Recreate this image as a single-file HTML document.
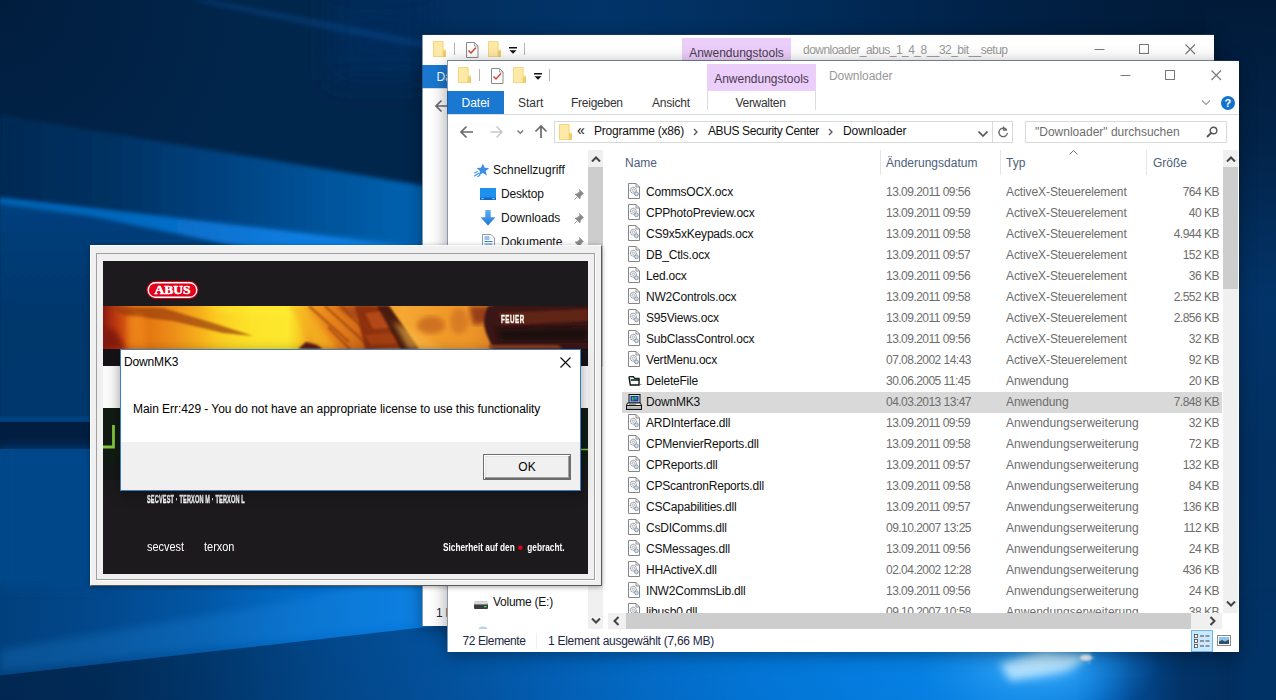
<!DOCTYPE html>
<html lang="de"><head><meta charset="utf-8"><title>DownMK3</title>
<style>
*{box-sizing:border-box;margin:0;padding:0}
html,body{width:1276px;height:700px;overflow:hidden;background:#05468c}
body{font-family:"Liberation Sans",sans-serif;font-size:12px;color:#111;position:relative}
#bg{position:absolute;left:0;top:0}
.win{position:absolute;background:#fff;width:792px;height:591px;overflow:hidden}
.wsh{position:absolute;width:792px;height:591px;box-shadow:0 -1px 0 rgba(40,60,95,.6),0 3px 16px rgba(0,0,0,.38)}
.wbd{position:absolute;left:0;top:0;width:792px;height:591px;box-shadow:inset 1px 0 0 rgba(40,70,110,.55)}
.vsep{position:absolute;width:1px;height:12px;background:#b4b4b4}
.ctxtab{position:absolute;left:260px;top:3px;width:109px;height:27px;background:#ebcef9;color:#4a3a52;font-size:12px;text-align:center;line-height:30px}
.wtitle{position:absolute;top:7px;color:#999;font-size:12px;line-height:17px;white-space:nowrap}
.capbtn{position:absolute;left:672px;top:7px}
.tabs{position:absolute;left:0;top:30px;width:792px;height:24px;border-bottom:1px solid #dadbdc}
.tab{position:absolute;top:1px;height:22px;line-height:23px;font-size:12px;color:#333;white-space:nowrap}
.tab.file{left:0;top:0;height:23px;width:57px;background:#1a78d0;color:#fff;text-align:center;line-height:25px}
.addr{position:absolute;left:107px;top:60px;width:459px;height:22px;border:1px solid #d9d9d9;background:#fff}
.addr span{position:absolute;top:-1px;line-height:20px;font-size:12px;white-space:nowrap;color:#111}
.search{position:absolute;left:578px;top:60px;width:202px;height:22px;border:1px solid #d9d9d9;color:#6d6d6d;font-size:12px;line-height:21px;padding-left:9px;white-space:nowrap}
.nav{position:absolute;left:1px;top:89px;width:140px;height:479px;overflow:hidden}
.nav div{position:absolute;white-space:nowrap;font-size:12px;line-height:16px}
.sb{position:absolute;background:#f0f0f0}
.thumb{position:absolute;background:#cdcdcd}
.list{position:absolute;left:157px;top:114px;width:618px;height:438px;overflow:hidden}
.hdr{position:absolute;left:157px;top:89px;width:618px;height:25px}
.hdr span{position:absolute;top:5px;font-size:12px;line-height:16px;color:#4c607a}
.hdr i{position:absolute;top:0;width:1px;height:25px;background:#e5e5e5}
.row{position:absolute;left:0;width:618px;height:21px;line-height:21px;font-size:12px;white-space:nowrap}
.row.sel{background:#d9d9d9;left:18px;width:600px}
.row span{position:absolute;top:0}
.row .fi{position:absolute;left:24px;top:.5px}
.row .c1{left:42px;color:#111;letter-spacing:-.2px}
.row .c2{left:282px;color:#6d6d6d;letter-spacing:-.53px}
.row .c3{left:402px;color:#6d6d6d;letter-spacing:-.1px}
.row .c4{right:3px;color:#6d6d6d;letter-spacing:-.5px}
.row.sel .fi{left:4px;top:2px}.row.sel .c1{left:24px}.row.sel .c2{left:264px}.row.sel .c3{left:384px}
.status{position:absolute;left:0;top:568px;width:792px;height:24px;font-size:12px;line-height:24px;color:#1c2745}
.status span{position:absolute;top:0;white-space:nowrap}
#splash{position:absolute;left:90px;top:245px;width:512px;height:341px;background:#f0f0f0;border:1px solid #f9fcff;border-right-color:#5a5a5a;border-bottom-color:#5a5a5a;box-shadow:0 1px 5px rgba(0,0,0,.35)}
#splash .inner{position:absolute;left:5px;top:7px;width:499px;height:327px;border:1px solid #a0a0a0;box-shadow:1px 1px 0 #fff;background:#f0f0f0}
#pic{position:absolute;left:103px;top:261px;width:485px;height:313px;background:#1c1a1d;overflow:hidden}
#pic .t{position:absolute;color:#fff;white-space:nowrap;transform-origin:0 50%}
#msg{position:absolute;left:120px;top:349px;width:461px;height:142px;background:#fff;border:1px solid #3b7cc4;box-shadow:0 3px 12px rgba(0,0,0,.4)}
#msg .ttl{position:absolute;left:3px;top:4px;font-size:12px;line-height:16px;color:#000;letter-spacing:-.15px}
#msg .txt{position:absolute;left:12px;top:51px;font-size:12px;line-height:16px;color:#000;white-space:nowrap;letter-spacing:-.055px}
#msg .foot{position:absolute;left:0;top:92px;width:459px;height:48px;background:#f0f0f0}
#msg .ok{position:absolute;left:362px;top:12px;width:88px;height:26px;border:1px solid #6e6e6e;box-shadow:inset 1px 1px 0 #fff,inset -1px -1px 0 #696969,inset -2px -2px 0 #a0a0a0,inset 2px 2px 0 #e3e3e3;background:#f0f0f0;text-align:center;line-height:24px;font-size:12px;color:#000}
</style></head><body>
<svg id="bg" width="1276" height="700" viewBox="0 0 1276 700">
<defs>
<linearGradient id="gTop" x1="380" y1="0" x2="1276" y2="0" gradientUnits="userSpaceOnUse"><stop offset="0.000" stop-color="#022c5a"/><stop offset="0.246" stop-color="#023469"/><stop offset="0.469" stop-color="#012c5a"/><stop offset="0.692" stop-color="#012146"/><stop offset="0.915" stop-color="#011a38"/><stop offset="1.000" stop-color="#011936"/></linearGradient><linearGradient id="gA" x1="0" y1="0" x2="450" y2="0" gradientUnits="userSpaceOnUse"><stop offset="0.000" stop-color="#012a55"/><stop offset="0.222" stop-color="#01305f"/><stop offset="0.489" stop-color="#014280"/><stop offset="0.778" stop-color="#0158a0"/><stop offset="1.000" stop-color="#0266b8"/></linearGradient><linearGradient id="gB" x1="0" y1="200" x2="0" y2="480" gradientUnits="userSpaceOnUse"><stop offset="0.000" stop-color="#01407e"/><stop offset="0.250" stop-color="#013a72"/><stop offset="0.450" stop-color="#02376c"/><stop offset="1.000" stop-color="#013870"/></linearGradient><linearGradient id="gS" x1="0" y1="0" x2="450" y2="0" gradientUnits="userSpaceOnUse"><stop offset="0.000" stop-color="#0462b2"/><stop offset="0.267" stop-color="#0568be"/><stop offset="0.667" stop-color="#0a7de1"/><stop offset="1.000" stop-color="#0a80e4"/></linearGradient><linearGradient id="gU" x1="0" y1="0" x2="460" y2="0" gradientUnits="userSpaceOnUse"><stop offset="0.000" stop-color="#01407d"/><stop offset="0.217" stop-color="#02488c"/><stop offset="0.435" stop-color="#0256a4"/><stop offset="0.652" stop-color="#046cc8"/><stop offset="0.870" stop-color="#0578dc"/><stop offset="1.000" stop-color="#057ade"/></linearGradient><linearGradient id="gL" x1="0" y1="0" x2="1276" y2="0" gradientUnits="userSpaceOnUse"><stop offset="0.000" stop-color="#012852"/><stop offset="0.078" stop-color="#012a56"/><stop offset="0.165" stop-color="#01376c"/><stop offset="0.251" stop-color="#024688"/><stop offset="0.353" stop-color="#03529e"/><stop offset="0.431" stop-color="#035fb4"/><stop offset="0.509" stop-color="#036cc8"/><stop offset="0.588" stop-color="#0376d7"/><stop offset="0.666" stop-color="#047de1"/><stop offset="0.721" stop-color="#0682e6"/><stop offset="0.784" stop-color="#0e8cec"/><stop offset="0.842" stop-color="#0c84e4"/><stop offset="0.862" stop-color="#0569c3"/><stop offset="0.886" stop-color="#034b94"/><stop offset="0.926" stop-color="#023469"/><stop offset="0.965" stop-color="#022e5f"/><stop offset="1.000" stop-color="#022c5a"/></linearGradient><linearGradient id="gR" x1="0" y1="0" x2="0" y2="700" gradientUnits="userSpaceOnUse"><stop offset="0.000" stop-color="#011a38"/><stop offset="0.210" stop-color="#02244a"/><stop offset="0.430" stop-color="#023469"/><stop offset="0.640" stop-color="#023062"/><stop offset="1.000" stop-color="#023266"/></linearGradient><linearGradient id="gBotV" x1="0" y1="640" x2="0" y2="700" gradientUnits="userSpaceOnUse"><stop offset="0" stop-color="#001a40" stop-opacity="0"/><stop offset="1" stop-color="#001a40" stop-opacity=".03"/></linearGradient><radialGradient id="gC" cx="0" cy="0" r="260" gradientUnits="userSpaceOnUse"><stop offset="0" stop-color="#011d3e" stop-opacity="1"/><stop offset="1" stop-color="#011d3e" stop-opacity="0"/></radialGradient><radialGradient id="glow" cx="1040" cy="664" r="120" gradientUnits="userSpaceOnUse" gradientTransform="translate(1040 664) scale(1 .5) translate(-1040 -664)"><stop offset="0" stop-color="#62c2ff" stop-opacity=".95"/><stop offset=".4" stop-color="#2ea0f4" stop-opacity=".6"/><stop offset="1" stop-color="#1488e4" stop-opacity="0"/></radialGradient><filter id="b6"><feGaussianBlur stdDeviation="6"/></filter>
<filter id="b2"><feGaussianBlur stdDeviation="2"/></filter>
<filter id="b1"><feGaussianBlur stdDeviation="1"/></filter>
<filter id="b4" x="-30%" y="-60%" width="160%" height="220%"><feGaussianBlur stdDeviation="4"/></filter>
<filter id="b14" x="-20%" y="-50%" width="140%" height="200%"><feGaussianBlur stdDeviation="14"/></filter>
</defs>
<rect width="1276" height="700" fill="#01264c"/>
<rect x="380" y="0" width="896" height="70" fill="url(#gTop)"/>
<rect x="330" y="-10" width="100" height="90" fill="#022c5a" filter="url(#b14)"/>
<rect x="180" y="50" width="280" height="150" fill="url(#gD)" filter="url(#b14)"/>
<rect width="300" height="300" fill="url(#gC)"/>
<polygon points="188,0 212,0 330,22 440,44 440,52 320,28" fill="#0a5aa8" opacity=".28" filter="url(#b2)"/>
<polygon points="0,115 450,190 450,480 0,480" fill="url(#gA)" filter="url(#b2)"/>
<polygon points="0,198 230,224.600 379,241.800 450,250 450,480 0,480" fill="url(#gB)" filter="url(#b1)"/>
<polygon points="0,197.500 230,224 379,241.200 450,249.400 450,290 379,270 230,245 90,216 0,204" fill="url(#gS)" filter="url(#b2)"/>
<rect x="-5" y="416.500" width="110" height="5" fill="#024687" opacity=".8" filter="url(#b1)"/>
<rect x="-5" y="422" width="110" height="27" fill="#011e41"/>
<rect x="0" y="449" width="100" height="240" fill="#01468a"/>
<polygon points="0,580 460,580 460,640 0,690" fill="url(#gU)"/>
<polygon points="0,672 200,649 450,620.500 460,619 460,560 300,600 0,650" fill="#2a9cf2" opacity=".2" filter="url(#b4)"/>
<rect x="0" y="449" width="100" height="138" fill="#01468a" filter="url(#b6)"/>
<polygon points="0,675.600 200,652.800 450,624.300 470,622 1276,622 1276,710 0,710" fill="url(#gL)"/>
<rect x="0" y="640" width="1276" height="60" fill="url(#gBotV)"/>
<rect x="850" y="560" width="330" height="140" fill="url(#glow)"/>
<polygon points="1091,655 1045,651 1000,664 1010,681 1068,671" fill="#c4eaff" opacity=".85" filter="url(#b4)"/>
<ellipse cx="1086" cy="657.500" rx="6" ry="3" fill="#fff" filter="url(#b1)"/><path d="M1089 652v12M1082 658h13" stroke="#bfe6ff" stroke-width="1" opacity=".7" filter="url(#b1)"/>
<rect x="1205" y="0" width="80" height="640" fill="url(#gR)"/>
<rect x="1236" y="600" width="50" height="110" fill="url(#gR)" filter="url(#b6)"/>
</svg>
<div class="wsh" style="left:422px;top:35px"></div><div class="win" style="left:422px;top:35px"><svg width="13" height="16" viewBox="0 0 13 16" style="position:absolute;left:11px;top:6px"><path d="M0 0h10.500v16h-10.500z" fill="#ffe9a6"/><path d="M.5 .5h9.500v15h-9.500z" fill="none" stroke="#f3d680" stroke-width="1"/><path d="M10 9.500h3v6.500h-3z" fill="#efcb6a"/><path d="M10 9.500l3-1.500v2z" fill="#f7dc8c"/></svg><div class="vsep" style="left:32px;top:8px"></div><svg width="13" height="16" viewBox="0 0 13 16" style="position:absolute;left:44px;top:7px"><path d="M.5 .5h8l3.500 3.500v11.500h-11.500z" fill="#fff" stroke="#8a8a8a"/><path d="M8.500 .5v3.500h3.500" fill="none" stroke="#8a8a8a" stroke-width=".8"/><path d="M2.500 8.500l2.500 2.500l5-5.500" fill="none" stroke="#d9452f" stroke-width="1.500"/></svg><svg width="13" height="16" viewBox="0 0 13 16" style="position:absolute;left:66px;top:6px"><path d="M0 0h10.500v16h-10.500z" fill="#ffe9a6"/><path d="M.5 .5h9.500v15h-9.500z" fill="none" stroke="#f3d680" stroke-width="1"/><path d="M10 9.500h3v6.500h-3z" fill="#efcb6a"/><path d="M10 9.500l3-1.500v2z" fill="#f7dc8c"/></svg><svg width="8" height="7" viewBox="0 0 8 7" style="position:absolute;left:87px;top:12px"><path d="M0 .75h8" stroke="#111" stroke-width="1.500"/><path d="M.5 3.300h7l-3.500 3.500z" fill="#111"/></svg><div class="vsep" style="left:102px;top:8px"></div><div class="ctxtab">Anwendungstools</div><div class="wtitle" style="left:381px;letter-spacing:-0.53px">downloader_abus_1_4_8__32_bit__setup</div><svg class="capbtn" style="left:670.500px" width="110" height="14" viewBox="0 0 110 14"><path d="M1.500 7.500h10" stroke="#777" stroke-width="1"/><rect x="46.500" y="2.500" width="9" height="9" fill="none" stroke="#777"/><path d="M92.500 2.500l9.500 9.500M102 2.500l-9.500 9.500" stroke="#777" stroke-width="1.100"/></svg><div class="tabs"><div class="tab file">Datei</div></div><svg width="90" height="16" viewBox="0 0 90 16" style="position:absolute;left:12px;top:63px"><path d="M2.500 8h11.500M7.500 2.500l-5.500 5.500l5.500 5.500" fill="none" stroke="#6a6a6a" stroke-width="1.700"/></svg><div style="position:absolute;left:14px;top:570px;font-size:12px;color:#1c2745;line-height:16px;letter-spacing:-.27px">1 Element ausgewählt</div><div class="wbd"></div></div>
<div class="wsh" style="left:447px;top:61px"></div><div class="win" style="left:447px;top:61px"><svg width="13" height="16" viewBox="0 0 13 16" style="position:absolute;left:11px;top:6px"><path d="M0 0h10.500v16h-10.500z" fill="#ffe9a6"/><path d="M.5 .5h9.500v15h-9.500z" fill="none" stroke="#f3d680" stroke-width="1"/><path d="M10 9.500h3v6.500h-3z" fill="#efcb6a"/><path d="M10 9.500l3-1.500v2z" fill="#f7dc8c"/></svg><div class="vsep" style="left:32px;top:8px"></div><svg width="13" height="16" viewBox="0 0 13 16" style="position:absolute;left:44px;top:7px"><path d="M.5 .5h8l3.500 3.500v11.500h-11.500z" fill="#fff" stroke="#8a8a8a"/><path d="M8.500 .5v3.500h3.500" fill="none" stroke="#8a8a8a" stroke-width=".8"/><path d="M2.500 8.500l2.500 2.500l5-5.500" fill="none" stroke="#d9452f" stroke-width="1.500"/></svg><svg width="13" height="16" viewBox="0 0 13 16" style="position:absolute;left:66px;top:6px"><path d="M0 0h10.500v16h-10.500z" fill="#ffe9a6"/><path d="M.5 .5h9.500v15h-9.500z" fill="none" stroke="#f3d680" stroke-width="1"/><path d="M10 9.500h3v6.500h-3z" fill="#efcb6a"/><path d="M10 9.500l3-1.500v2z" fill="#f7dc8c"/></svg><svg width="8" height="7" viewBox="0 0 8 7" style="position:absolute;left:87px;top:12px"><path d="M0 .75h8" stroke="#111" stroke-width="1.500"/><path d="M.5 3.300h7l-3.500 3.500z" fill="#111"/></svg><div class="vsep" style="left:102px;top:8px"></div><div class="ctxtab">Anwendungstools</div><div class="wtitle" style="left:382px;letter-spacing:-0.06px">Downloader</div><svg class="capbtn" width="110" height="14" viewBox="0 0 110 14"><path d="M1.500 7.500h10" stroke="#777" stroke-width="1"/><rect x="46.500" y="2.500" width="9" height="9" fill="none" stroke="#777"/><path d="M92.500 2.500l9.500 9.500M102 2.500l-9.500 9.500" stroke="#777" stroke-width="1.100"/></svg><div class="tabs"><div class="tab file">Datei</div><div class="tab" style="left:71px">Start</div><div class="tab" style="left:124px;letter-spacing:-.25px">Freigeben</div><div class="tab" style="left:205px;letter-spacing:-.2px">Ansicht</div><div class="tab" style="left:260px;top:0;width:107px;text-align:center;height:20px;line-height:25px;letter-spacing:-.3px">Verwalten</div><div style="position:absolute;left:260px;top:0;width:109px;height:19px;border-left:1px solid #dadbdc;border-right:1px solid #dadbdc"></div><svg width="10" height="6" viewBox="0 0 10 6" style="position:absolute;left:754px;top:9px"><path d="M1 .5l4 4l4-4" fill="none" stroke="#999" stroke-width="1.200"/></svg><div style="position:absolute;left:773.500px;top:4.500px;width:14.500px;height:14.500px;border-radius:8px;background:#1273cf;color:#fff;font-weight:bold;font-size:11px;line-height:15px;text-align:center">?</div></div><svg width="90" height="16" viewBox="0 0 90 16" style="position:absolute;left:12px;top:63px"><path d="M2.500 8h11.500M7.500 2.500l-5.500 5.500l5.500 5.500" fill="none" stroke="#6a6a6a" stroke-width="1.700"/><path d="M31.500 8h11.500M37.500 2.500l5.500 5.500l-5.500 5.500" fill="none" stroke="#c8c8c8" stroke-width="1.500"/><path d="M58.500 6.500l2.800 2.800l2.800-2.800" fill="none" stroke="#777" stroke-width="1.300"/><path d="M82 14v-11.500M76.500 7.500l5.500-5.500l5.500 5.500" fill="none" stroke="#6a6a6a" stroke-width="1.700"/></svg><div class="addr"><svg width="13" height="16" viewBox="0 0 13 16" style="position:absolute;left:4px;top:2px"><path d="M0 0h10.500v16h-10.500z" fill="#ffe9a6"/><path d="M.5 .5h9.500v15h-9.500z" fill="none" stroke="#f3d680" stroke-width="1"/><path d="M10 9.500h3v6.500h-3z" fill="#efcb6a"/><path d="M10 9.500l3-1.500v2z" fill="#f7dc8c"/></svg><span style="left:22px;letter-spacing:-1px;font-size:14px;top:-2px">«</span><span style="left:39px;letter-spacing:-.23px">Programme (x86)</span><span style="left:153px;letter-spacing:-.39px">ABUS Security Center</span><span style="left:288px;letter-spacing:-.06px">Downloader</span><svg width="5" height="8" viewBox="0 0 5 8" style="position:absolute;left:138px;top:6px"><path d="M1 1l3 3l-3 3" fill="none" stroke="#555" stroke-width="1.300"/></svg><svg width="5" height="8" viewBox="0 0 5 8" style="position:absolute;left:273px;top:6px"><path d="M1 1l3 3l-3 3" fill="none" stroke="#555" stroke-width="1.300"/></svg><svg width="10" height="6" viewBox="0 0 10 6" style="position:absolute;left:423px;top:9px"><path d="M.5 .5l4.500 4.500l4.500-4.500" fill="none" stroke="#555" stroke-width="1.600"/></svg><div style="position:absolute;left:437px;top:0;width:1px;height:20px;background:#d9d9d9"></div><svg width="12" height="12" viewBox="0 0 12 12" style="position:absolute;left:442px;top:4px"><path d="M9.500 3.500a4.300 4.300 0 1 0 1 3.500" fill="none" stroke="#666" stroke-width="1.300"/><path d="M6.500 .5v3.500h3.500" fill="none" stroke="#666" stroke-width="1.300"/></svg></div><div class="search">"Downloader" durchsuchen<svg width="12" height="12" viewBox="0 0 12 12" style="position:absolute;left:180px;top:4px"><circle cx="7.500" cy="4.500" r="3.300" fill="none" stroke="#555" stroke-width="1.400"/><path d="M5 7l-4 4" stroke="#555" stroke-width="1.800"/></svg></div><div class="nav"><svg width="15" height="13" viewBox="0 0 15 13" style="position:absolute;left:26px;top:13.500px"><path d="M8.800 -.4l1.900 4.100l4.500 .4l-3.500 2.900l1.200 4.500l-4.100-2.500l-4 2.500l1.200-4.500l-3.500-2.900l4.500-.4z" fill="#3a8ee6"/><path d="M0 12.300l5-3.200M.3 9.300l3.400-2M3.300 12.800l3-1.800" stroke="#4a9eec" stroke-width="1.300"/></svg><div style="left:45px;top:12px">Schnellzugriff</div><svg width="16" height="12" viewBox="0 0 16 12" style="position:absolute;left:32px;top:38px"><rect x="0" y="0" width="16" height="12" fill="#1e90ee"/><rect x="0" y="9.500" width="16" height="2.500" fill="#0f6cc4"/><path d="M1.500 10.700h2M12.500 10.700h2" stroke="#dff" stroke-width=".8"/></svg><div style="left:53px;top:36px;letter-spacing:-.2px">Desktop</div><svg width="16" height="16" viewBox="0 0 16 16" style="position:absolute;left:32px;top:60px"><defs><linearGradient id="dl" x1="0" y1="0" x2="0" y2="1"><stop offset="0" stop-color="#62b0f4"/><stop offset="1" stop-color="#1c74d4"/></linearGradient></defs><path d="M5.300 0h5.400v7.200h4.800l-7.500 8.300l-7.500-8.300h4.800z" fill="url(#dl)"/></svg><div style="left:53px;top:60px">Downloads</div><svg width="13" height="16" viewBox="0 0 13 16" style="position:absolute;left:34px;top:84px"><path d="M.5 .5h8.500l3.500 3.500v11.500h-12z" fill="#fff" stroke="#8a9ab0"/><path d="M2.500 3h5M2.500 5h5M2.500 7.500h8M2.500 10h8M2.500 12.500h8" stroke="#3a7fd0" stroke-width="1"/></svg><div style="left:53px;top:84px">Dokumente</div><svg width="10" height="12" viewBox="0 0 10 12" style="position:absolute;left:126px;top:39px"><path d="M5.500 .5l4 4l-1 .6l-2.200 2.800l-.3 2.100l-2.500-2.500l-3 3l3-3l-2.500-2.500l2.100-.3l2.800-2.200z" fill="#8a8a8a" stroke="#8a8a8a" stroke-width=".6"/></svg><svg width="10" height="12" viewBox="0 0 10 12" style="position:absolute;left:126px;top:63px"><path d="M5.500 .5l4 4l-1 .6l-2.200 2.800l-.3 2.100l-2.500-2.500l-3 3l3-3l-2.500-2.500l2.100-.3l2.800-2.200z" fill="#8a8a8a" stroke="#8a8a8a" stroke-width=".6"/></svg><svg width="10" height="12" viewBox="0 0 10 12" style="position:absolute;left:126px;top:87px"><path d="M5.500 .5l4 4l-1 .6l-2.200 2.800l-.3 2.100l-2.500-2.500l-3 3l3-3l-2.500-2.500l2.100-.3l2.800-2.200z" fill="#8a8a8a" stroke="#8a8a8a" stroke-width=".6"/></svg><svg width="14" height="8" viewBox="0 0 14 8" style="position:absolute;left:25.500px;top:451px"><rect x="0" y="2.500" width="14" height="5.500" rx="1" fill="#3c3c3c"/><path d="M1.500 .3h11l1.500 3h-14z" fill="#dcdcdc" stroke="#aaa" stroke-width=".5"/><rect x="10" y="5" width="2.500" height="1.300" fill="#3ee06a"/></svg><div style="left:45px;top:444px;letter-spacing:-.25px">Volume (E:)</div><svg width="10" height="3" viewBox="0 0 10 3" style="position:absolute;left:30px;top:476px"><ellipse cx="5" cy="3.500" rx="4.500" ry="3" fill="#b4d4ee"/></svg></div><div class="sb" style="left:141px;top:89px;width:15px;height:479px"><div class="thumb" style="left:0;top:17px;width:15px;height:200px"></div><svg width="10" height="6" viewBox="0 0 10 6" style="position:absolute;left:2.5px;top:6px"><path d="M1 5.500l4-4l4 4" fill="none" stroke="#444" stroke-width="2"/></svg><svg width="10" height="6" viewBox="0 0 10 6" style="position:absolute;left:2.5px;top:468px"><path d="M1 .5l4 4l4-4" fill="none" stroke="#444" stroke-width="2"/></svg></div><div class="hdr"><span style="left:21px">Name</span><i style="left:276px"></i><span style="left:282px">Änderungsdatum</span><i style="left:396px"></i><span style="left:402px">Typ</span><i style="left:542px"></i><span style="left:549px">Größe</span><svg width="9" height="5" viewBox="0 0 9 5" style="position:absolute;left:465px;top:0"><path d="M.5 4.500l4-4l4 4" fill="none" stroke="#7a7a7a" stroke-width="1"/></svg></div><div class="list"><div class="row" style="top:7px"><svg class="fi" width="12" height="16" viewBox="0 0 12 16"><path d="M.5 .5h7.500l3.500 3.500v11.500h-11z" fill="#fff" stroke="#868686"/><path d="M8 .5v3.500h3.500" fill="none" stroke="#868686" stroke-width=".9"/><circle cx="5.300" cy="7.200" r="3" fill="#f2f5f8" stroke="#7a828e" stroke-width=".9" stroke-dasharray="1.500 .45"/><circle cx="5.300" cy="7.200" r="1.200" fill="#fff" stroke="#8a94a4" stroke-width=".6"/><circle cx="8.400" cy="10.800" r="1.900" fill="#cfe0f2" stroke="#7a8698" stroke-width=".8"/></svg><span class="c1">CommsOCX.ocx</span><span class="c2">13.09.2011 09:56</span><span class="c3">ActiveX-Steuerelement</span><span class="c4">764 KB</span></div>
<div class="row" style="top:28px"><svg class="fi" width="12" height="16" viewBox="0 0 12 16"><path d="M.5 .5h7.500l3.500 3.500v11.500h-11z" fill="#fff" stroke="#868686"/><path d="M8 .5v3.500h3.500" fill="none" stroke="#868686" stroke-width=".9"/><circle cx="5.300" cy="7.200" r="3" fill="#f2f5f8" stroke="#7a828e" stroke-width=".9" stroke-dasharray="1.500 .45"/><circle cx="5.300" cy="7.200" r="1.200" fill="#fff" stroke="#8a94a4" stroke-width=".6"/><circle cx="8.400" cy="10.800" r="1.900" fill="#cfe0f2" stroke="#7a8698" stroke-width=".8"/></svg><span class="c1">CPPhotoPreview.ocx</span><span class="c2">13.09.2011 09:59</span><span class="c3">ActiveX-Steuerelement</span><span class="c4">40 KB</span></div>
<div class="row" style="top:49px"><svg class="fi" width="12" height="16" viewBox="0 0 12 16"><path d="M.5 .5h7.500l3.500 3.500v11.500h-11z" fill="#fff" stroke="#868686"/><path d="M8 .5v3.500h3.500" fill="none" stroke="#868686" stroke-width=".9"/><circle cx="5.300" cy="7.200" r="3" fill="#f2f5f8" stroke="#7a828e" stroke-width=".9" stroke-dasharray="1.500 .45"/><circle cx="5.300" cy="7.200" r="1.200" fill="#fff" stroke="#8a94a4" stroke-width=".6"/><circle cx="8.400" cy="10.800" r="1.900" fill="#cfe0f2" stroke="#7a8698" stroke-width=".8"/></svg><span class="c1">CS9x5xKeypads.ocx</span><span class="c2">13.09.2011 09:58</span><span class="c3">ActiveX-Steuerelement</span><span class="c4">4.944 KB</span></div>
<div class="row" style="top:70px"><svg class="fi" width="12" height="16" viewBox="0 0 12 16"><path d="M.5 .5h7.500l3.500 3.500v11.500h-11z" fill="#fff" stroke="#868686"/><path d="M8 .5v3.500h3.500" fill="none" stroke="#868686" stroke-width=".9"/><circle cx="5.300" cy="7.200" r="3" fill="#f2f5f8" stroke="#7a828e" stroke-width=".9" stroke-dasharray="1.500 .45"/><circle cx="5.300" cy="7.200" r="1.200" fill="#fff" stroke="#8a94a4" stroke-width=".6"/><circle cx="8.400" cy="10.800" r="1.900" fill="#cfe0f2" stroke="#7a8698" stroke-width=".8"/></svg><span class="c1">DB_Ctls.ocx</span><span class="c2">13.09.2011 09:57</span><span class="c3">ActiveX-Steuerelement</span><span class="c4">152 KB</span></div>
<div class="row" style="top:91px"><svg class="fi" width="12" height="16" viewBox="0 0 12 16"><path d="M.5 .5h7.500l3.500 3.500v11.500h-11z" fill="#fff" stroke="#868686"/><path d="M8 .5v3.500h3.500" fill="none" stroke="#868686" stroke-width=".9"/><circle cx="5.300" cy="7.200" r="3" fill="#f2f5f8" stroke="#7a828e" stroke-width=".9" stroke-dasharray="1.500 .45"/><circle cx="5.300" cy="7.200" r="1.200" fill="#fff" stroke="#8a94a4" stroke-width=".6"/><circle cx="8.400" cy="10.800" r="1.900" fill="#cfe0f2" stroke="#7a8698" stroke-width=".8"/></svg><span class="c1">Led.ocx</span><span class="c2">13.09.2011 09:56</span><span class="c3">ActiveX-Steuerelement</span><span class="c4">36 KB</span></div>
<div class="row" style="top:112px"><svg class="fi" width="12" height="16" viewBox="0 0 12 16"><path d="M.5 .5h7.500l3.500 3.500v11.500h-11z" fill="#fff" stroke="#868686"/><path d="M8 .5v3.500h3.500" fill="none" stroke="#868686" stroke-width=".9"/><circle cx="5.300" cy="7.200" r="3" fill="#f2f5f8" stroke="#7a828e" stroke-width=".9" stroke-dasharray="1.500 .45"/><circle cx="5.300" cy="7.200" r="1.200" fill="#fff" stroke="#8a94a4" stroke-width=".6"/><circle cx="8.400" cy="10.800" r="1.900" fill="#cfe0f2" stroke="#7a8698" stroke-width=".8"/></svg><span class="c1">NW2Controls.ocx</span><span class="c2">13.09.2011 09:58</span><span class="c3">ActiveX-Steuerelement</span><span class="c4">2.552 KB</span></div>
<div class="row" style="top:133px"><svg class="fi" width="12" height="16" viewBox="0 0 12 16"><path d="M.5 .5h7.500l3.500 3.500v11.500h-11z" fill="#fff" stroke="#868686"/><path d="M8 .5v3.500h3.500" fill="none" stroke="#868686" stroke-width=".9"/><circle cx="5.300" cy="7.200" r="3" fill="#f2f5f8" stroke="#7a828e" stroke-width=".9" stroke-dasharray="1.500 .45"/><circle cx="5.300" cy="7.200" r="1.200" fill="#fff" stroke="#8a94a4" stroke-width=".6"/><circle cx="8.400" cy="10.800" r="1.900" fill="#cfe0f2" stroke="#7a8698" stroke-width=".8"/></svg><span class="c1">S95Views.ocx</span><span class="c2">13.09.2011 09:59</span><span class="c3">ActiveX-Steuerelement</span><span class="c4">2.856 KB</span></div>
<div class="row" style="top:154px"><svg class="fi" width="12" height="16" viewBox="0 0 12 16"><path d="M.5 .5h7.500l3.500 3.500v11.500h-11z" fill="#fff" stroke="#868686"/><path d="M8 .5v3.500h3.500" fill="none" stroke="#868686" stroke-width=".9"/><circle cx="5.300" cy="7.200" r="3" fill="#f2f5f8" stroke="#7a828e" stroke-width=".9" stroke-dasharray="1.500 .45"/><circle cx="5.300" cy="7.200" r="1.200" fill="#fff" stroke="#8a94a4" stroke-width=".6"/><circle cx="8.400" cy="10.800" r="1.900" fill="#cfe0f2" stroke="#7a8698" stroke-width=".8"/></svg><span class="c1">SubClassControl.ocx</span><span class="c2">13.09.2011 09:56</span><span class="c3">ActiveX-Steuerelement</span><span class="c4">32 KB</span></div>
<div class="row" style="top:175px"><svg class="fi" width="12" height="16" viewBox="0 0 12 16"><path d="M.5 .5h7.500l3.500 3.500v11.500h-11z" fill="#fff" stroke="#868686"/><path d="M8 .5v3.500h3.500" fill="none" stroke="#868686" stroke-width=".9"/><circle cx="5.300" cy="7.200" r="3" fill="#f2f5f8" stroke="#7a828e" stroke-width=".9" stroke-dasharray="1.500 .45"/><circle cx="5.300" cy="7.200" r="1.200" fill="#fff" stroke="#8a94a4" stroke-width=".6"/><circle cx="8.400" cy="10.800" r="1.900" fill="#cfe0f2" stroke="#7a8698" stroke-width=".8"/></svg><span class="c1">VertMenu.ocx</span><span class="c2">07.08.2002 14:43</span><span class="c3">ActiveX-Steuerelement</span><span class="c4">92 KB</span></div>
<div class="row" style="top:196px"><svg class="fi" width="14" height="12" viewBox="0 0 14 12" style="margin-top:3px"><path d="M1 1.700h4.500l1 1.600h4.500v1.700" fill="#8fd0a8" stroke="#0a2a1a" stroke-width="1.300"/><path d="M1 1.700l1.300 8.300h8.700v-5h-8.200" fill="#fff" stroke="#111" stroke-width="1.400"/><rect x="12.300" y="9" width="1" height="1" fill="#456"/></svg><span class="c1">DeleteFile</span><span class="c2">30.06.2005 11:45</span><span class="c3">Anwendung</span><span class="c4">20 KB</span></div>
<div class="row sel" style="top:217px"><svg class="fi" width="16" height="16" viewBox="0 0 16 16"><rect x="3" y=".5" width="11" height="8.500" fill="#d4d8dc" stroke="#111"/><rect x="4.500" y="2" width="8" height="5.500" fill="#1a3eb0"/><rect x="6" y="3" width="1.600" height="3.500" fill="#35c04a"/><rect x="8.600" y="3" width="2" height="2.500" fill="#35c04a"/><path d="M1.500 9h13l1 2.500h-15z" fill="#fff" stroke="#111"/><rect x=".5" y="11.500" width="15" height="4" fill="#f4f4f4" stroke="#111"/><path d="M1 13h14M1 14.300h14" stroke="#777" stroke-width=".7"/><path d="M3 10.300h7" stroke="#555" stroke-width=".7"/></svg><span class="c1">DownMK3</span><span class="c2">04.03.2013 13:47</span><span class="c3">Anwendung</span><span class="c4">7.848 KB</span></div>
<div class="row" style="top:238px"><svg class="fi" width="12" height="16" viewBox="0 0 12 16"><path d="M.5 .5h7.500l3.500 3.500v11.500h-11z" fill="#fff" stroke="#868686"/><path d="M8 .5v3.500h3.500" fill="none" stroke="#868686" stroke-width=".9"/><circle cx="5.300" cy="7.200" r="3" fill="#f2f5f8" stroke="#7a828e" stroke-width=".9" stroke-dasharray="1.500 .45"/><circle cx="5.300" cy="7.200" r="1.200" fill="#fff" stroke="#8a94a4" stroke-width=".6"/><circle cx="8.400" cy="10.800" r="1.900" fill="#cfe0f2" stroke="#7a8698" stroke-width=".8"/></svg><span class="c1">ARDInterface.dll</span><span class="c2">13.09.2011 09:59</span><span class="c3" style="letter-spacing:.03px">Anwendungserweiterung</span><span class="c4">32 KB</span></div>
<div class="row" style="top:259px"><svg class="fi" width="12" height="16" viewBox="0 0 12 16"><path d="M.5 .5h7.500l3.500 3.500v11.500h-11z" fill="#fff" stroke="#868686"/><path d="M8 .5v3.500h3.500" fill="none" stroke="#868686" stroke-width=".9"/><circle cx="5.300" cy="7.200" r="3" fill="#f2f5f8" stroke="#7a828e" stroke-width=".9" stroke-dasharray="1.500 .45"/><circle cx="5.300" cy="7.200" r="1.200" fill="#fff" stroke="#8a94a4" stroke-width=".6"/><circle cx="8.400" cy="10.800" r="1.900" fill="#cfe0f2" stroke="#7a8698" stroke-width=".8"/></svg><span class="c1">CPMenvierReports.dll</span><span class="c2">13.09.2011 09:58</span><span class="c3" style="letter-spacing:.03px">Anwendungserweiterung</span><span class="c4">72 KB</span></div>
<div class="row" style="top:280px"><svg class="fi" width="12" height="16" viewBox="0 0 12 16"><path d="M.5 .5h7.500l3.500 3.500v11.500h-11z" fill="#fff" stroke="#868686"/><path d="M8 .5v3.500h3.500" fill="none" stroke="#868686" stroke-width=".9"/><circle cx="5.300" cy="7.200" r="3" fill="#f2f5f8" stroke="#7a828e" stroke-width=".9" stroke-dasharray="1.500 .45"/><circle cx="5.300" cy="7.200" r="1.200" fill="#fff" stroke="#8a94a4" stroke-width=".6"/><circle cx="8.400" cy="10.800" r="1.900" fill="#cfe0f2" stroke="#7a8698" stroke-width=".8"/></svg><span class="c1">CPReports.dll</span><span class="c2">13.09.2011 09:57</span><span class="c3" style="letter-spacing:.03px">Anwendungserweiterung</span><span class="c4">132 KB</span></div>
<div class="row" style="top:301px"><svg class="fi" width="12" height="16" viewBox="0 0 12 16"><path d="M.5 .5h7.500l3.500 3.500v11.500h-11z" fill="#fff" stroke="#868686"/><path d="M8 .5v3.500h3.500" fill="none" stroke="#868686" stroke-width=".9"/><circle cx="5.300" cy="7.200" r="3" fill="#f2f5f8" stroke="#7a828e" stroke-width=".9" stroke-dasharray="1.500 .45"/><circle cx="5.300" cy="7.200" r="1.200" fill="#fff" stroke="#8a94a4" stroke-width=".6"/><circle cx="8.400" cy="10.800" r="1.900" fill="#cfe0f2" stroke="#7a8698" stroke-width=".8"/></svg><span class="c1">CPScantronReports.dll</span><span class="c2">13.09.2011 09:58</span><span class="c3" style="letter-spacing:.03px">Anwendungserweiterung</span><span class="c4">84 KB</span></div>
<div class="row" style="top:322px"><svg class="fi" width="12" height="16" viewBox="0 0 12 16"><path d="M.5 .5h7.500l3.500 3.500v11.500h-11z" fill="#fff" stroke="#868686"/><path d="M8 .5v3.500h3.500" fill="none" stroke="#868686" stroke-width=".9"/><circle cx="5.300" cy="7.200" r="3" fill="#f2f5f8" stroke="#7a828e" stroke-width=".9" stroke-dasharray="1.500 .45"/><circle cx="5.300" cy="7.200" r="1.200" fill="#fff" stroke="#8a94a4" stroke-width=".6"/><circle cx="8.400" cy="10.800" r="1.900" fill="#cfe0f2" stroke="#7a8698" stroke-width=".8"/></svg><span class="c1">CSCapabilities.dll</span><span class="c2">13.09.2011 09:57</span><span class="c3" style="letter-spacing:.03px">Anwendungserweiterung</span><span class="c4">136 KB</span></div>
<div class="row" style="top:343px"><svg class="fi" width="12" height="16" viewBox="0 0 12 16"><path d="M.5 .5h7.500l3.500 3.500v11.500h-11z" fill="#fff" stroke="#868686"/><path d="M8 .5v3.500h3.500" fill="none" stroke="#868686" stroke-width=".9"/><circle cx="5.300" cy="7.200" r="3" fill="#f2f5f8" stroke="#7a828e" stroke-width=".9" stroke-dasharray="1.500 .45"/><circle cx="5.300" cy="7.200" r="1.200" fill="#fff" stroke="#8a94a4" stroke-width=".6"/><circle cx="8.400" cy="10.800" r="1.900" fill="#cfe0f2" stroke="#7a8698" stroke-width=".8"/></svg><span class="c1">CsDIComms.dll</span><span class="c2">09.10.2007 13:25</span><span class="c3" style="letter-spacing:.03px">Anwendungserweiterung</span><span class="c4">112 KB</span></div>
<div class="row" style="top:364px"><svg class="fi" width="12" height="16" viewBox="0 0 12 16"><path d="M.5 .5h7.500l3.500 3.500v11.500h-11z" fill="#fff" stroke="#868686"/><path d="M8 .5v3.500h3.500" fill="none" stroke="#868686" stroke-width=".9"/><circle cx="5.300" cy="7.200" r="3" fill="#f2f5f8" stroke="#7a828e" stroke-width=".9" stroke-dasharray="1.500 .45"/><circle cx="5.300" cy="7.200" r="1.200" fill="#fff" stroke="#8a94a4" stroke-width=".6"/><circle cx="8.400" cy="10.800" r="1.900" fill="#cfe0f2" stroke="#7a8698" stroke-width=".8"/></svg><span class="c1">CSMessages.dll</span><span class="c2">13.09.2011 09:56</span><span class="c3" style="letter-spacing:.03px">Anwendungserweiterung</span><span class="c4">24 KB</span></div>
<div class="row" style="top:385px"><svg class="fi" width="12" height="16" viewBox="0 0 12 16"><path d="M.5 .5h7.500l3.500 3.500v11.500h-11z" fill="#fff" stroke="#868686"/><path d="M8 .5v3.500h3.500" fill="none" stroke="#868686" stroke-width=".9"/><circle cx="5.300" cy="7.200" r="3" fill="#f2f5f8" stroke="#7a828e" stroke-width=".9" stroke-dasharray="1.500 .45"/><circle cx="5.300" cy="7.200" r="1.200" fill="#fff" stroke="#8a94a4" stroke-width=".6"/><circle cx="8.400" cy="10.800" r="1.900" fill="#cfe0f2" stroke="#7a8698" stroke-width=".8"/></svg><span class="c1">HHActiveX.dll</span><span class="c2">02.04.2002 12:28</span><span class="c3" style="letter-spacing:.03px">Anwendungserweiterung</span><span class="c4">436 KB</span></div>
<div class="row" style="top:406px"><svg class="fi" width="12" height="16" viewBox="0 0 12 16"><path d="M.5 .5h7.500l3.500 3.500v11.500h-11z" fill="#fff" stroke="#868686"/><path d="M8 .5v3.500h3.500" fill="none" stroke="#868686" stroke-width=".9"/><circle cx="5.300" cy="7.200" r="3" fill="#f2f5f8" stroke="#7a828e" stroke-width=".9" stroke-dasharray="1.500 .45"/><circle cx="5.300" cy="7.200" r="1.200" fill="#fff" stroke="#8a94a4" stroke-width=".6"/><circle cx="8.400" cy="10.800" r="1.900" fill="#cfe0f2" stroke="#7a8698" stroke-width=".8"/></svg><span class="c1">INW2CommsLib.dll</span><span class="c2">13.09.2011 09:56</span><span class="c3" style="letter-spacing:.03px">Anwendungserweiterung</span><span class="c4">24 KB</span></div>
<div class="row" style="top:427px"><svg class="fi" width="12" height="16" viewBox="0 0 12 16"><path d="M.5 .5h7.500l3.500 3.500v11.500h-11z" fill="#fff" stroke="#868686"/><path d="M8 .5v3.500h3.500" fill="none" stroke="#868686" stroke-width=".9"/><circle cx="5.300" cy="7.200" r="3" fill="#f2f5f8" stroke="#7a828e" stroke-width=".9" stroke-dasharray="1.500 .45"/><circle cx="5.300" cy="7.200" r="1.200" fill="#fff" stroke="#8a94a4" stroke-width=".6"/><circle cx="8.400" cy="10.800" r="1.900" fill="#cfe0f2" stroke="#7a8698" stroke-width=".8"/></svg><span class="c1">libusb0.dll</span><span class="c2">09.10.2007 10:58</span><span class="c3" style="letter-spacing:.03px">Anwendungserweiterung</span><span class="c4">38 KB</span></div></div><div class="sb" style="left:776px;top:89px;width:15px;height:463px"><div class="thumb" style="left:0;top:17px;width:15px;height:122px"></div><svg width="10" height="6" viewBox="0 0 10 6" style="position:absolute;left:2.5px;top:6px"><path d="M1 5.500l4-4l4 4" fill="none" stroke="#444" stroke-width="2"/></svg><svg width="10" height="6" viewBox="0 0 10 6" style="position:absolute;left:2.5px;top:451px"><path d="M1 .5l4 4l4-4" fill="none" stroke="#444" stroke-width="2"/></svg></div><div class="sb" style="left:161px;top:552px;width:614px;height:16px"><div class="thumb" style="left:18px;top:0;width:565px;height:16px"></div><svg width="6" height="10" viewBox="0 0 6 10" style="position:absolute;left:5px;top:3px"><path d="M5.500 1l-4 4l4 4" fill="none" stroke="#444" stroke-width="2"/></svg><svg width="6" height="10" viewBox="0 0 6 10" style="position:absolute;left:602px;top:3px"><path d="M.5 1l4 4l-4 4" fill="none" stroke="#444" stroke-width="2"/></svg></div><div class="status"><span style="left:15.500px;letter-spacing:-.4px">72 Elemente</span><i style="position:absolute;left:89px;top:4px;width:1px;height:16px;background:#f0f0f0"></i><span style="left:101px;letter-spacing:-.27px">1 Element ausgewählt (7,66 MB)</span><div style="position:absolute;left:744px;top:1px;width:22px;height:22px;background:#cce8ff;border:1px solid #66b7ee"></div><svg width="16" height="14" viewBox="0 0 16 14" style="position:absolute;left:747px;top:5px"><g fill="#fff" stroke="#444" stroke-width=".8"><rect x=".5" y=".5" width="3" height="3"/><rect x=".5" y="5.500" width="3" height="3"/><rect x=".5" y="10.500" width="3" height="3"/></g><path d="M6 2h4M11.500 2h4M6 7h4M11.500 7h4M6 12h4M11.500 12h4" stroke="#444" stroke-width="1.100"/></svg><svg width="14" height="11" viewBox="0 0 14 11" style="position:absolute;left:770px;top:6px"><rect x=".5" y=".5" width="13" height="10" fill="#fff" stroke="#8a8a8a"/><rect x="2" y="2" width="10" height="7" fill="#8ec4f4"/><path d="M2 9v-2.500l3-1.500l3 1.500l4-2v4.500z" fill="#34505e"/></svg></div><div class="wbd"></div></div>
<div id="splash"><div class="inner"></div></div>
<div id="pic">
<svg width="485" height="313" viewBox="0 0 485 313" style="position:absolute;left:0;top:0">
<defs>
<linearGradient id="fire" x1="0" y1="0" x2="485" y2="0" gradientUnits="userSpaceOnUse"><stop offset="0.000" stop-color="#8a1c10"/><stop offset="0.019" stop-color="#b03010"/><stop offset="0.039" stop-color="#cc4a10"/><stop offset="0.066" stop-color="#e87a14"/><stop offset="0.097" stop-color="#e47812"/><stop offset="0.148" stop-color="#ee9018"/><stop offset="0.200" stop-color="#f6b01c"/><stop offset="0.231" stop-color="#fbc820"/><stop offset="0.268" stop-color="#fcd826"/><stop offset="0.309" stop-color="#fde42a"/><stop offset="0.381" stop-color="#fce82e"/><stop offset="0.402" stop-color="#f8d024"/><stop offset="0.427" stop-color="#f0a020"/><stop offset="0.464" stop-color="#e8861a"/><stop offset="0.515" stop-color="#d87218"/><stop offset="0.553" stop-color="#c05a16"/><stop offset="0.586" stop-color="#f0a030"/><stop offset="0.619" stop-color="#f5a834"/><stop offset="0.701" stop-color="#f09a28"/><stop offset="0.757" stop-color="#ee9628"/><stop offset="0.794" stop-color="#e08828"/><stop offset="0.808" stop-color="#4a1c12"/><stop offset="1.000" stop-color="#34140f"/></linearGradient>
<linearGradient id="fsh" x1="0" y1="45" x2="0" y2="88" gradientUnits="userSpaceOnUse"><stop offset="0" stop-color="#5a2006" stop-opacity=".45"/><stop offset=".35" stop-color="#6a2a08" stop-opacity="0"/><stop offset="1" stop-color="#a04008" stop-opacity=".2"/></linearGradient>
<filter id="fb"><feGaussianBlur stdDeviation="2.500"/></filter>
<filter id="fb1"><feGaussianBlur stdDeviation="1.200"/></filter>
<clipPath id="fc"><rect x="0" y="45" width="485" height="43"/></clipPath>
</defs>
<rect x="0" y="45" width="485" height="43" fill="url(#fire)"/>
<g clip-path="url(#fc)">
<polygon points="0,66 14,70 22,88 0,88" fill="#7a1410" filter="url(#fb)" opacity=".8"/>
<polygon points="6,46 60,47 110,62 150,75 120,72 70,60 20,54" fill="#9a3c0e" filter="url(#fb1)" opacity=".7"/>
<polygon points="24,56 40,54 44,88 26,88" fill="#f08a1a" filter="url(#fb)" opacity=".55"/>
<polygon points="100,45 200,45 190,56 120,52" fill="#fff03a" filter="url(#fb)" opacity=".35"/>
<polygon points="186,45 215,88 235,88 200,45" fill="#f6b422" filter="url(#fb)" opacity=".7"/>
<g stroke="#8a3210" stroke-width="2.200" opacity=".65" filter="url(#fb1)" fill="none"><path d="M206 45l40 36"/><path d="M222 45l44 40"/><path d="M238 45l38 38"/><path d="M225 66l22 22"/></g>
<polygon points="232,45 262,45 272,60 250,58" fill="#9a3c12" filter="url(#fb)" opacity=".7"/>
<polygon points="252,45 285,45 315,88 262,88" fill="#8a2e10" filter="url(#fb1)" opacity=".92"/>
<polygon points="262,52 284,50 296,66 270,68" fill="#c2521a" filter="url(#fb1)" opacity=".7"/>
<polygon points="262,74 296,72 306,82 268,84" fill="#b04616" filter="url(#fb1)" opacity=".6"/>
<polygon points="274,45 286,45 316,88 298,88" fill="#3a1210" filter="url(#fb1)" opacity=".85"/>
<polygon points="195,88 203,81 214,84 220,88" fill="#5a1a14" filter="url(#fb1)"/>
<ellipse cx="328" cy="64" rx="14" ry="9" fill="#c4641e" filter="url(#fb)" opacity=".75"/>
<ellipse cx="356" cy="60" rx="9" ry="13" fill="#c86a22" filter="url(#fb)" opacity=".6"/>
<polygon points="290,60 305,88 340,88 320,76" fill="#fbb848" filter="url(#fb)" opacity=".6"/>
<polygon points="366,45 386,45 384,62 370,64" fill="#8a3018" filter="url(#fb)" opacity=".85"/>
<path d="M385 45 C378 58 380 72 392 88 L485 88 L485 45 Z" fill="#3a1612" filter="url(#fb1)"/>
<polygon points="395,52 485,48 485,60 400,64" fill="#6e2a16" filter="url(#fb1)" opacity=".75"/>
<polygon points="392,68 485,66 485,80 398,80" fill="#170b0b" filter="url(#fb)" opacity=".8"/>
<polygon points="386,84 455,84 460,88 386,88" fill="#a84c1a" filter="url(#fb1)" opacity=".8"/>
</g>
<rect x="0" y="88" width="485" height="17" fill="#151316"/>
<rect x="0" y="105" width="485" height="42" fill="#fbfbfb"/>
<rect x="0" y="147" width="485" height="70" fill="#111b14"/>
<rect x="0" y="205" width="485" height="14" fill="#161718"/>
<path d="M0 186h10.500v-22" fill="none" stroke="#86c83c" stroke-width="2.800"/>
<path d="M477 188.500h8" stroke="#86c83c" stroke-width="1.500"/>
<g transform="translate(43.500,20)"><rect x="0" y="0" width="52" height="18" rx="9" fill="#d8001c"/><rect x="1.750" y="1.750" width="48.500" height="14.500" rx="7.250" fill="#e2001a" stroke="#fff" stroke-width="1.300"/><text x="26" y="13" text-anchor="middle" font-family="Liberation Serif,serif" font-weight="bold" font-size="12" fill="#fff" stroke="#fff" stroke-width=".5" textLength="36" lengthAdjust="spacingAndGlyphs">ABUS</text></g>
<circle cx="417.300" cy="286.700" r="2.300" fill="#e2001a"/>
</svg>
<div class="t" style="left:397.500px;top:52px;font-size:10.400px;font-weight:bold;transform:scaleX(.6);letter-spacing:.9px;line-height:12px;-webkit-text-stroke:.3px #fff;margin-top:1px">FEUER</div>
<div class="t" style="left:43.500px;top:232.500px;font-size:10.200px;font-weight:bold;transform:scaleX(.545);letter-spacing:.3px;line-height:12px;-webkit-text-stroke:.35px #fff">SECVEST · TERXON M · TERXON L</div>
<div class="t" style="left:43.500px;top:278px;font-size:12.600px;line-height:16px;transform:scaleX(.87)">secvest<span style="color:#7a1020">.</span></div>
<div class="t" style="left:100.800px;top:278px;font-size:12.600px;line-height:16px;transform:scaleX(.87)">terxon<span style="color:#7a1020">.</span></div>
<div class="t" style="left:340px;top:278px;font-size:11.500px;font-weight:bold;transform:scaleX(.72);line-height:16px">Sicherheit auf den <span style="display:inline-block;width:11px"></span> gebracht.</div>
</div>
<div id="msg"><div class="ttl">DownMK3</div>
<svg width="11" height="11" viewBox="0 0 11 11" style="position:absolute;left:439px;top:7px"><path d="M.5 .5l10 10M10.500 .5l-10 10" stroke="#111" stroke-width="1.200"/></svg>
<div class="txt">Main Err:429 - You do not have an appropriate license to use this functionality</div>
<div class="foot"><div class="ok">OK</div></div></div>
</body></html>
